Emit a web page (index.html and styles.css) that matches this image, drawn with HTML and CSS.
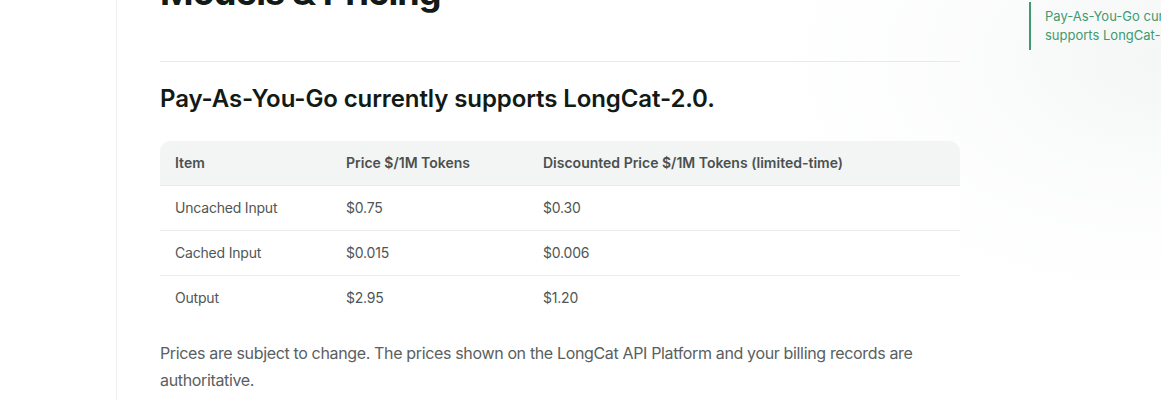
FILE: index.html
```html
<!DOCTYPE html>
<html lang="en">
<head>
<meta charset="utf-8">
<title>Models &amp; Pricing</title>
<link rel="stylesheet" href="styles.css">
</head>
<body>
<div class="page">
  <aside class="sidebar"></aside>
  <main class="main">
    <div class="content">
      <div class="title-row">
        <h1 class="title">Models &amp; Pricing</h1>
        <div class="copy-btn" aria-label="Copy page"></div>
      </div>
      <hr class="divider">
      <h2 class="section-title">Pay-As-You-Go currently supports LongCat-2.0.</h2>
      <table class="price-table">
        <thead>
          <tr>
            <th>Item</th>
            <th>Price $/1M Tokens</th>
            <th>Discounted Price $/1M Tokens (limited-time)</th>
          </tr>
        </thead>
        <tbody>
          <tr><td>Uncached Input</td><td>$0.75</td><td>$0.30</td></tr>
          <tr><td>Cached Input</td><td>$0.015</td><td>$0.006</td></tr>
          <tr><td>Output</td><td>$2.95</td><td>$1.20</td></tr>
        </tbody>
      </table>
      <p class="note">Prices are subject to change. The prices shown on the LongCat API Platform and your billing records are authoritative.</p>
    </div>
  </main>
  <nav class="toc">
    <a class="toc-link" href="#">Pay-As-You-Go currently supports LongCat-2.0.</a>
  </nav>
</div>
</body>
</html>
```

FILE: styles.css
```css
html, body {
  margin: 0;
  padding: 0;
  height: 400px;
  overflow: hidden;
  background: #ffffff;
}

body {
  font-family: Inter, "Noto Sans", "Liberation Sans", sans-serif;
  color: #4b5050;
}

.page {
  display: flex;
  width: 1161px;
  height: 400px;
  overflow: hidden;
  background-color: #ffffff;
  background-image:
    radial-gradient(ellipse 380px 240px at 100% 15%, rgba(243,246,245,0.9) 0%, rgba(248,250,249,0.6) 50%, rgba(255,255,255,0) 100%);
}

.sidebar {
  flex: 0 0 116px;
  border-right: 1px solid #ecefee;
  background: #ffffff;
}

.main {
  flex: 0 0 auto;
  padding-left: 43px;
}

.content {
  width: 800px;
  margin-top: -28px;
}

.title-row {
  display: flex;
  justify-content: space-between;
  align-items: flex-start;
}

.title {
  margin: 0;
  font-size: 36px;
  line-height: 40px;
  font-weight: 700;
  color: #111a15;
  letter-spacing: -0.9px;
}

.copy-btn {
  margin-right: 5px;
  width: 63px;
  height: 28px;
  box-sizing: border-box;
  border: 1px solid #e3e6e5;
  border-radius: 6px;
  background: #fff;
}

.divider {
  margin: 49px 0 0;
  border: 0;
  border-top: 1px solid #e7eaea;
  height: 0;
}

.section-title {
  margin: 21px 0 0;
  font-size: 24px;
  line-height: 32px;
  font-weight: 600;
  color: #111a15;
  letter-spacing: -0.1px;
}

.price-table {
  margin-top: 26px;
  width: 800px;
  border-collapse: separate;
  border-spacing: 0;
  font-size: 14px;
  line-height: 20px;
  background: #ffffff;
}

.price-table th {
  background: #f3f4f4;
  text-align: left;
  font-weight: 600;
  color: #4a5150;
  padding: 12px 15px;
  border-bottom: 1px solid #e7eaea;
}

.price-table th:first-child { border-top-left-radius: 10px; }
.price-table th:last-child { border-top-right-radius: 10px; }

.price-table th:nth-child(1) { width: 141px; }
.price-table th:nth-child(2) { width: 167px; }

.price-table td {
  padding: 12px 15px;
  color: #505655;
  letter-spacing: -0.2px;
  border-bottom: 1px solid #e9ecec;
}

.price-table tbody tr:last-child td {
  border-bottom: 0;
}

.note {
  margin: 20px 0 0;
  font-size: 16px;
  line-height: 27px;
  color: #5a605f;
  letter-spacing: -0.35px;
}

.toc {
  flex: 0 0 auto;
  margin-left: 69px;
  margin-top: 2px;
  width: 200px;
  align-self: flex-start;
}

.toc-link {
  display: block;
  border-left: 2px solid #3f9a70;
  padding: 5px 0 5px 14px;
  font-size: 13px;
  line-height: 19px;
  color: #3f9a70;
  text-decoration: none;
  width: 160px;
}
```
